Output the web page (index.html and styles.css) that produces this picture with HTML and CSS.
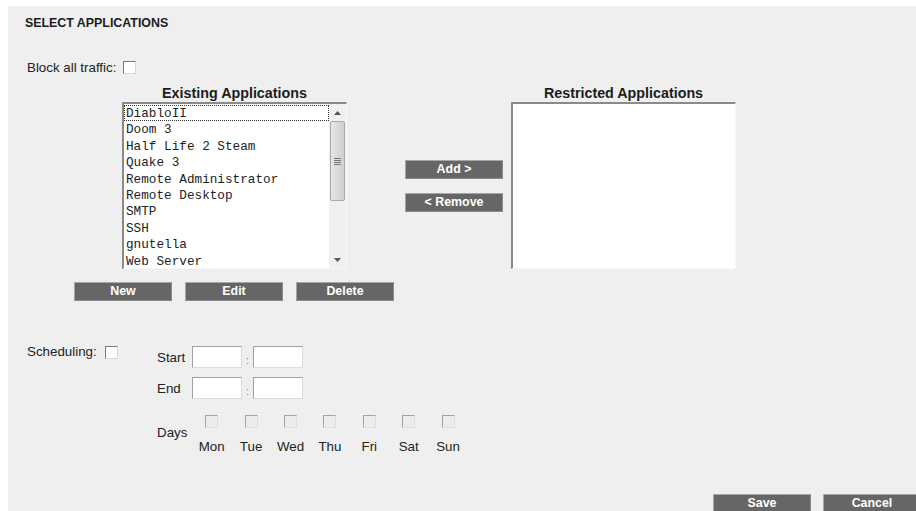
FILE: index.html
```html
<!DOCTYPE html>
<html>
<head>
<meta charset="utf-8">
<title>Select Applications</title>
<link rel="stylesheet" href="styles.css">
</head>
<body>
<div class="panel">
  <h1 class="title">SELECT APPLICATIONS</h1>

  <div class="block-row">
    <span class="label">Block all traffic:</span>
    <span class="check"></span>
  </div>

  <div class="apps">
    <div class="apps-col">
      <div class="col-head">Existing Applications</div>
      <div class="listbox">
        <ul class="items">
          <li class="focused">DiabloII</li>
          <li>Doom 3</li>
          <li>Half Life 2 Steam</li>
          <li>Quake 3</li>
          <li>Remote Administrator</li>
          <li>Remote Desktop</li>
          <li>SMTP</li>
          <li>SSH</li>
          <li>gnutella</li>
          <li>Web Server</li>
        </ul>
        <div class="scrollbar">
          <div class="sb-arrow up"><svg width="7" height="4" viewBox="0 0 7 4"><path d="M0 4 L3.5 0 L7 4 Z" fill="#555"/></svg></div>
          <div class="sb-track">
            <div class="sb-thumb"><span></span><span></span><span></span><span></span></div>
          </div>
          <div class="sb-arrow down"><svg width="7" height="4" viewBox="0 0 7 4"><path d="M0 0 L3.5 4 L7 0 Z" fill="#555"/></svg></div>
        </div>
      </div>
      <div class="list-actions">
        <button class="btn">New</button>
        <button class="btn">Edit</button>
        <button class="btn">Delete</button>
      </div>
    </div>

    <div class="move-col">
      <button class="btn">Add &gt;</button>
      <button class="btn">&lt; Remove</button>
    </div>

    <div class="apps-col">
      <div class="col-head">Restricted Applications</div>
      <div class="listbox empty"></div>
    </div>
  </div>

  <div class="sched">
    <div class="sched-toggle">
      <span class="label">Scheduling:</span>
      <span class="check"></span>
    </div>
    <div class="sched-grid">
      <span class="row-label">Start</span>
      <div class="time">
        <span class="field"></span><span class="colon">:</span><span class="field"></span>
      </div>
      <span class="row-label">End</span>
      <div class="time">
        <span class="field"></span><span class="colon">:</span><span class="field"></span>
      </div>
      <span class="row-label days-label">Days</span>
      <div class="days">
        <div class="day"><span class="check off"></span><span>Mon</span></div>
        <div class="day"><span class="check off"></span><span>Tue</span></div>
        <div class="day"><span class="check off"></span><span>Wed</span></div>
        <div class="day"><span class="check off"></span><span>Thu</span></div>
        <div class="day"><span class="check off"></span><span>Fri</span></div>
        <div class="day"><span class="check off"></span><span>Sat</span></div>
        <div class="day"><span class="check off"></span><span>Sun</span></div>
      </div>
    </div>
  </div>

  <div class="footer">
    <button class="btn">Save</button>
    <button class="btn">Cancel</button>
  </div>
</div>
</body>
</html>
```

FILE: styles.css
```css
html, body {
  margin: 0;
  padding: 0;
  background: #ffffff;
  overflow: hidden;
}

body {
  padding: 6px 0 0 8px;
}

.panel {
  width: 930px;
  height: 520px;
  box-sizing: border-box;
  background: #efefef;
  padding: 10px 0 0 17px;
  font-family: "Liberation Sans", Arial, sans-serif;
  font-size: 13.33px;
  color: #222;
}

.title {
  margin: 0;
  font-size: 12.4px;
  line-height: 14px;
  font-weight: bold;
  color: #1c1c1c;
}

.block-row {
  display: flex;
  align-items: center;
  margin: 30px 0 0 2px;
  height: 15px;
}

.label {
  line-height: 15px;
}

.block-row .check {
  margin-left: 7px;
}

.check {
  display: inline-block;
  flex: none;
  width: 13px;
  height: 13px;
  box-sizing: border-box;
  background: #fff;
  border: 1px solid;
  border-color: #7b7b7b #d8d8d8 #d8d8d8 #7b7b7b;
}

.check.off {
  background: #ececec;
  border-color: #a3a3a3 #dedede #dedede #a3a3a3;
}

/* application lists */
.apps {
  display: flex;
  margin: 10px 0 0 97px;
}

.apps-col {
  width: 225px;
  flex: none;
}

.col-head {
  font-size: 14.3px;
  line-height: 16px;
  font-weight: bold;
  text-align: center;
  color: #1c1c1c;
  height: 17px;
}

.listbox {
  display: flex;
  height: 167px;
  box-sizing: border-box;
  background: #fff;
  border: 1px solid;
  border-top: 2px solid #8a8a8a;
  border-left: 2px solid #8a8a8a;
  border-right-color: #f7f7f7;
  border-bottom-color: #f7f7f7;
}

.items {
  list-style: none;
  margin: 0;
  padding: 1px 0 0;
  flex: 1;
  font-family: "Liberation Mono", "Courier New", monospace;
  font-size: 12.7px;
  color: #222;
}

.items li {
  box-sizing: border-box;
  height: 16.4px;
  padding: 2px 0 0 2px;
  line-height: 14.4px;
  white-space: nowrap;
}

.items li.focused {
  outline: 1px dotted #333;
  outline-offset: -1px;
}

.scrollbar {
  width: 17px;
  display: flex;
  flex-direction: column;
  background: #f0f0f0;
}

.sb-arrow {
  height: 17px;
  display: flex;
  align-items: center;
  justify-content: center;
}

.sb-track {
  flex: 1;
  padding: 0 1px;
}

.sb-thumb {
  height: 80px;
  box-sizing: border-box;
  border: 1px solid #a8a8a8;
  border-radius: 2px;
  background: linear-gradient(to right, #e6e6e6, #dadada 50%, #cfcfcf);
  display: flex;
  flex-direction: column;
  align-items: center;
  justify-content: center;
  gap: 1px;
}

.sb-thumb span {
  display: block;
  width: 7px;
  height: 1px;
  background: #777;
}

.list-actions {
  display: flex;
  gap: 13px;
  width: 320px;
  margin: 13px 0 0 -48px;
}

.move-col {
  display: flex;
  flex: none;
  flex-direction: column;
  gap: 14px;
  margin: 75px 8px 0 58px;
}

.btn {
  flex: none;
  width: 98px;
  height: 19px;
  padding: 0;
  box-sizing: border-box;
  background: #666666;
  color: #fff;
  font-family: "Liberation Sans", Arial, sans-serif;
  font-size: 12.4px;
  font-weight: bold;
  line-height: 17px;
  border: 1px solid;
  border-color: #a6a6a6 #8a8a8a #8a8a8a #a6a6a6;
  cursor: pointer;
}

/* scheduling */
.sched {
  display: flex;
  margin: 43px 0 0 2px;
}

.sched-toggle {
  display: flex;
  align-items: flex-start;
  width: 130px;
  flex: none;
}

.sched-toggle .check {
  margin: 2px 0 0 8px;
}

.sched-grid {
  display: grid;
  grid-template-columns: 35px auto;
  row-gap: 9px;
  margin-top: 2px;
}

.row-label {
  align-self: center;
  line-height: 15px;
}

.time {
  display: flex;
  align-items: center;
  height: 22px;
}

.field {
  display: inline-block;
  width: 50px;
  height: 22px;
  box-sizing: border-box;
  background: #fff;
  border: 1px solid;
  border-color: #a0a0a0 #dcdcdc #dcdcdc #a0a0a0;
}

.colon {
  width: 11px;
  text-align: center;
  color: #888;
  font-size: 11px;
  padding-top: 6px;
}

.days-label {
  padding-top: 2px;
}

.days {
  display: flex;
  margin-top: 7px;
}

.day {
  width: 39.4px;
  display: flex;
  flex-direction: column;
  align-items: center;
  gap: 11px;
  line-height: 15px;
}

.footer {
  display: flex;
  gap: 12px;
  margin: 40px 0 0 688px;
}
```
